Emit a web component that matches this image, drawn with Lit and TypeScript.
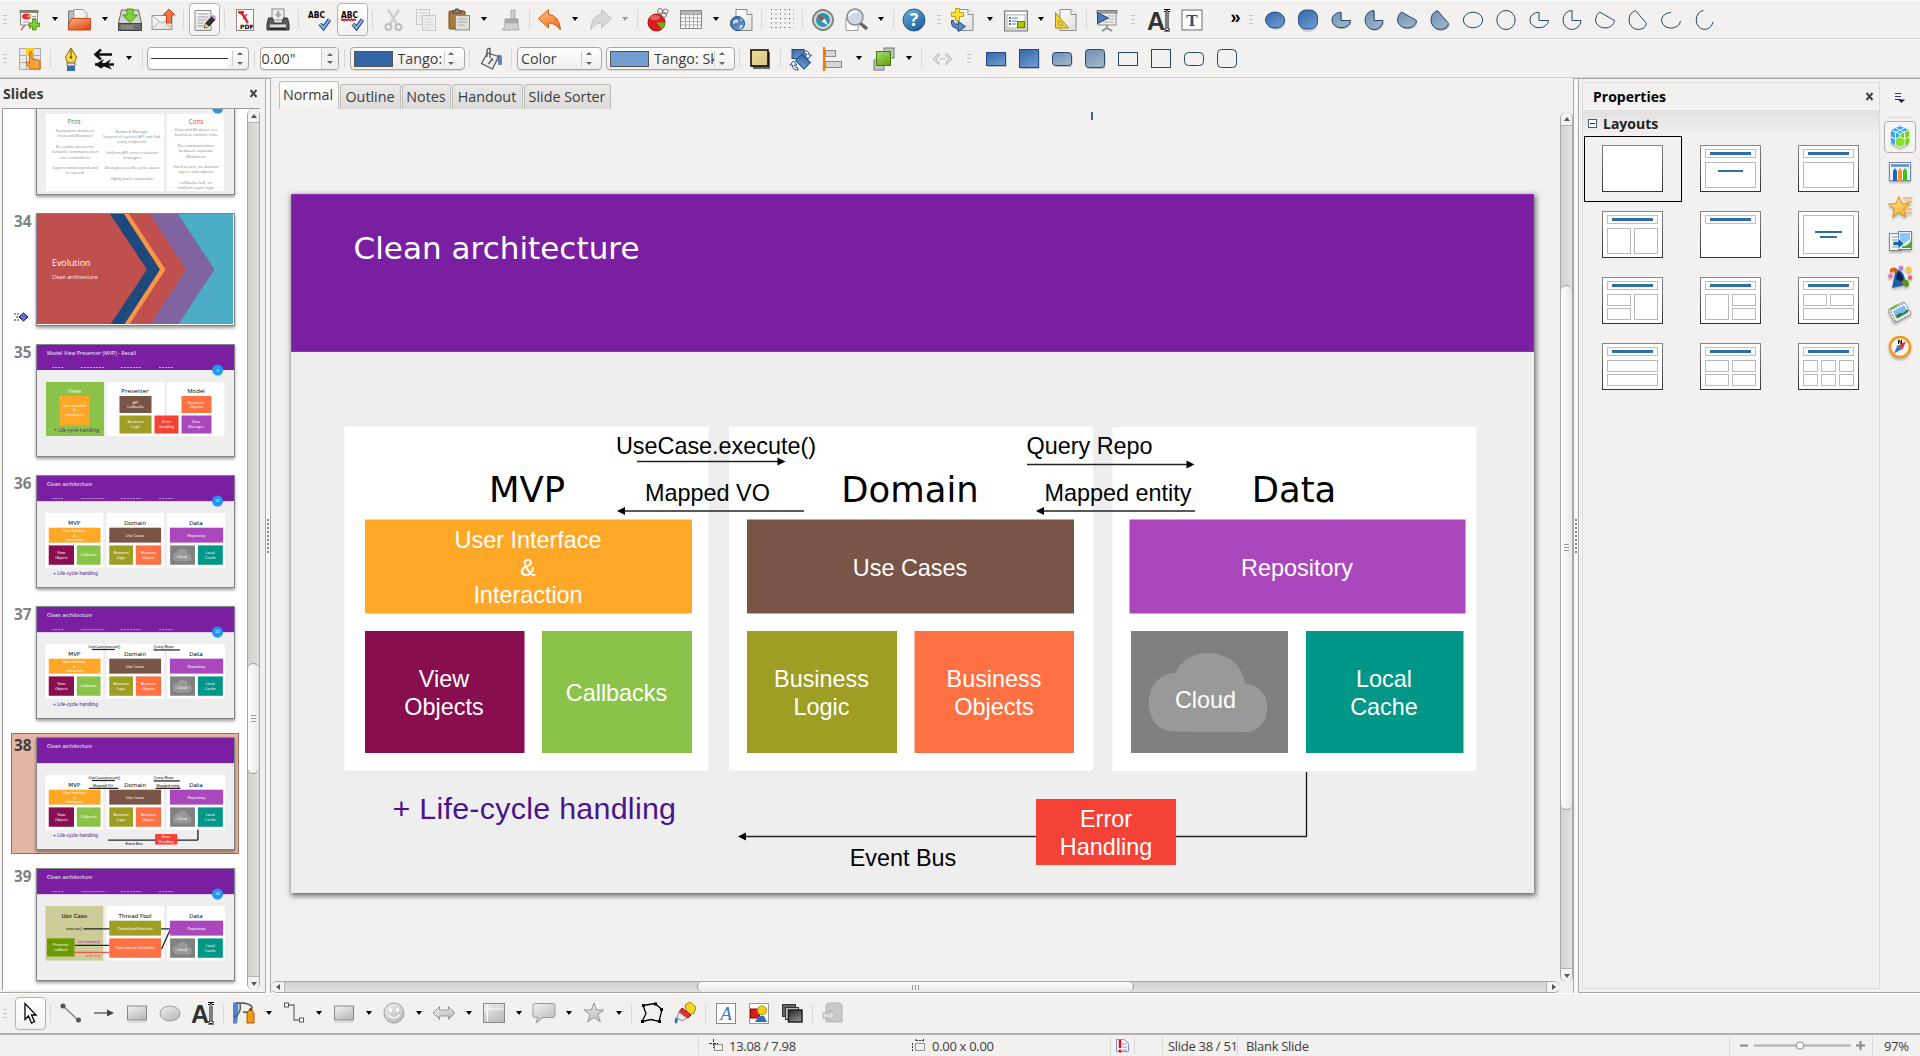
import { LitElement, html, css, svg, nothing } from "lit";
import { customElement } from "lit/decorators.js";
import { classMap } from "lit/directives/class-map.js";

/* ---------- icon artwork, 24 x 24 ---------- */
const page = svg`<path d="M4 1.500h11l5 5v16H4z" fill="url(#paper)" stroke="#8a8c88"/><path d="M15 1.500v5h5" fill="#fff" stroke="#8a8c88"/>`;
const box3 = (x: number, y: number, w: number, h: number, r = 0, f = "url(#navy)", s = "#204a87") =>
  svg`<rect x=${x + 1} y=${y + 1.5} width=${w} height=${h} rx=${r} fill="#000" opacity=".22"/><rect x=${x} y=${y} width=${w} height=${h} rx=${r} fill=${f} stroke=${s}/>`;
const pieW = "M12 4.200A9.300 7.800 0 1 0 21.500 12.500H12z";
const pieT = "M12 2.500A9 9.500 0 1 0 21 12.500H12z";
const segW = "M6.500 4L21.500 12.500A9.300 8 0 0 1 12 20A9.500 8 0 0 1 2.500 12Q2.500 7 6.500 4z";
const segT = "M9.500 2.500L20.500 15.500A9 7 0 0 1 12.500 21.500A9 9.500 0 0 1 3 12Q3 5 9.500 2.500z";
const blob = (d: string) => svg`<path d=${d} transform="translate(1 1.300)" fill="#000" opacity=".25"/><path d=${d} fill="url(#steel)" stroke="#204a6f"/>`;
const line = (d: string) => svg`<path d=${d} fill="none" stroke="#204a6f"/>`;
const check = svg`<path d="M13 16l3.500 4L22.500 11.500" fill="none" stroke="#204a87" stroke-width="4"/><path d="M13 16l3.500 4L22.500 11.500" fill="none" stroke="#8fb3e0" stroke-width="2"/>`;
const abc = svg`<text x="1" y="9.500" class="abc" textLength="17" lengthAdjust="spacingAndGlyphs">ABC</text>`;

const ICONS: Record<string, unknown> = {
  newpres: svg`<rect x="1.500" y="2" width="19" height="3" fill="#8a7a66"/><path d="M7 17l-4 5M12 17v4" stroke="#a67c52" stroke-width="1.500"/><rect x="2.500" y="4.500" width="17" height="12.500" fill="#f4f4f4" stroke="#8a8c88"/><ellipse cx="8.500" cy="8.500" rx="4.500" ry="3" fill="#d33"/><path d="M8.500 8.500l4-2.500v4z" fill="#f5b93f"/><path d="M14 8.500h4M14 10.500h4M5 14h6" stroke="#999"/><path d="M14.500 11.500h3.500v3.500h3.500v3.500H18v3.500h-3.500v-3.500H11V15h3.500z" fill="#7fd13a" stroke="#4e9a06"/>`,
  open: svg`<path d="M.5 3h7l1 2H11v15H.5z" fill="#b9bbb6" stroke="#777"/><path d="M6 1.500h9l4 4v12H6z" fill="url(#paper)" stroke="#999"/><path d="M3.500 10.500h19v11.500H.5v-5z" fill="url(#orange)" stroke="#c44a13"/>`,
  save: svg`<path d="M3.500 2h17l3 13v7H.5v-7z" fill="#d3d5d0" stroke="#666"/><path d="M.5 15.500h23v7H.5z" fill="#6c6e6a" stroke="#444"/><path d="M3 18h13M3 20h13" stroke="#a0a29e"/><path d="M9 1h6v6h4.500L12 14.500 4.500 7H9z" fill="#7ed03a" stroke="#4e9a06"/>`,
  mail: svg`<rect x="1" y="7.500" width="20" height="14" fill="url(#paper)" stroke="#999"/><path d="M1 7.500l10 8 10-8M1 21.500l7.500-8M21 21.500l-7.500-8" fill="none" stroke="#aaa"/><path d="M15.500 15V7h-3.500L18 1l6 6h-3.500v8z" fill="#f0764a" stroke="#d2461a"/>`,
  edit: svg`<path d="M3 2.500h16v20H3z" fill="url(#paper)" stroke="#8a8c88"/><path d="M5.500 6h11M5.500 9h11M5.500 12h9M5.500 15h6M5.500 18h6" stroke="#9a9a9a"/><path d="M12.500 20l1-4.500L20 8.500l3 3-6.500 7z" fill="#333" stroke="#111"/><path d="M12.500 20l1-4.500 3.500 3z" fill="#f5d08c"/><path d="M19.500 8.500l2-2 2.500 3-1.500 2z" fill="#c88ac4"/>`,
  pdf: svg`<rect x="3.500" y="1.500" width="17" height="21" fill="#f8f8f8" stroke="#8a8c88"/><path d="M6 4.500c5 0 6 7 9 10.500" fill="none" stroke="#d22" stroke-width="2.500"/><path d="M14 6l-4 5" stroke="#d22" stroke-width="1.200"/><path d="M5 4h6" stroke="#d22" stroke-width="2"/><text x="7" y="21" class="pdf">PDF</text>`,
  print: svg`<rect x="6" y="1" width="12" height="11" fill="#eee" stroke="#888"/><path d="M11 3h2.500v3H16l-3.700 4L8.500 6H11z" fill="#aaa"/><path d="M2.500 10h4l1.500 5h8l1.500-5h4l1.500 6v6H1v-6z" fill="#5a5c59" stroke="#333"/><rect x="4" y="16.500" width="16" height="4" fill="#ddd"/><path d="M4 20.500h16" stroke="#222" stroke-width="2"/>`,
  abc: svg`${abc}${check}`,
  abcauto: svg`${abc}<path d="M1 12.500l1.500-1.500 1.500 1.500 1.500-1.500 1.500 1.500 1.500-1.500 1.500 1.500 1.500-1.500 1.500 1.500 1.500-1.500 1.500 1.500" fill="none" stroke="#d11" stroke-width="1.500"/>${check}`,
  cut: svg`<path d="M7 1.500l8.500 14M18 1.500l-8.500 14" stroke="#d0d0ce" stroke-width="2.500"/><circle cx="7.500" cy="19" r="3" fill="none" stroke="#bdbdbb" stroke-width="2"/><circle cx="17.500" cy="19" r="3" fill="none" stroke="#bdbdbb" stroke-width="2"/>`,
  copy: svg`<rect x="2.500" y="1.500" width="13" height="15" fill="#eee" stroke="#c8c8c6"/><path d="M5 5h8M5 8h8M5 11h3" stroke="#d6d6d4"/><rect x="8.500" y="7.500" width="13" height="15" fill="#eee" stroke="#c8c8c6"/><path d="M11 11h8M11 14h8M11 17h8M11 20h5" stroke="#d0d0ce"/>`,
  paste: svg`<rect x="2" y="3" width="16" height="18" rx="1" fill="#a9793c" stroke="#6b4a1d"/><path d="M6 5V2.500h2.500V1h3v1.500H14V5z" fill="#888" stroke="#444"/><rect x="8.500" y="7.500" width="14" height="14.500" fill="#dededc" stroke="#888"/><path d="M11 11h9M11 14h9M11 17h6" stroke="#aaa"/>`,
  brush: svg`<path d="M14 2h4v9h-4z" fill="#ccc" stroke="#b0b0b0"/><path d="M8 11h13v4H8z" fill="#aaa" stroke="#999"/><path d="M8 15h13l1 7H5q3-2 3-7z" fill="#d2d2d0" stroke="#b0b0b0"/>`,
  undo: svg`<path d="M.5 10.500L10.500 1.500v5q11 1 12 15.500-5-7-12-7v5z" fill="url(#orange2)" stroke="#d2601a"/>`,
  redo: svg`<path d="M23.500 10.500L13.500 1.500v5Q3.500 7.500 2.500 22q4-7 11-7v5z" fill="#d8d8d6" stroke="#c2c2c0"/>`,
  chart: svg`<circle cx="10.500" cy="14.500" r="8.500" fill="#e01b1b" stroke="#9a0c0c"/><path d="M10.500 14.500h8.500a8.500 8.500 0 0 1-3 6.500z" fill="#59c016"/><ellipse cx="9" cy="9.500" rx="5" ry="2.500" fill="#fff" opacity=".3"/><circle cx="14" cy="3" r="2.500" fill="none" stroke="#777"/><circle cx="19.500" cy="3.500" r="2.500" fill="none" stroke="#777"/><circle cx="18" cy="7" r="2.500" fill="none" stroke="#777"/>`,
  table: svg`<rect x="1.500" y="2.500" width="21" height="18" fill="#fff" stroke="#888"/><path d="M2 3h20v3.500H2z" fill="#b5b7b2"/><path d="M2 6.500h20M2 10h20M2 13.500h20M2 17h20M6.500 6v14M10.500 6v14M14.500 6v14M18.500 6v14" stroke="#a9aba7"/>`,
  webdoc: svg`<g transform="translate(3 0)">${page}</g><circle cx="8.500" cy="15.500" r="7" fill="url(#navy)" stroke="#1d4a86"/><path d="M4 13q3-3 5-1t-2 3-3 2zM11 17q3-1 3 1l-3 4q-1-2 0-5zM11 10l3 2-2 1z" fill="#c8d8ee"/>`,
  grid: svg`${[1, 5.5, 10, 14.5, 19].map(y => svg`<path d=${`M1 ${y + 0.5}h23`} stroke="#444" stroke-dasharray="1 3.500"/>`)}`,
  compass: svg`<circle cx="12" cy="12" r="10.500" fill="#8a8c88" stroke="#777"/><circle cx="12" cy="12" r="8" fill="#2f93ab" stroke="#dcdcdc" stroke-width="2"/><path d="M6.500 6.500l7 4-3 3z" fill="#e23a2a"/><path d="M17.500 17.500l-7-4 3-3z" fill="#e6f2f5"/>`,
  zoom: svg`<path d="M2 10h12v12.500H2z" fill="#fff" stroke="#999"/><path d="M16 15l7 6" stroke="#666" stroke-width="3.500"/><circle cx="11" cy="9" r="8" fill="#cfd9e6" stroke="#8a8c88" stroke-width="1.500"/><path d="M5 8q2-5 8-4" stroke="#fff" stroke-width="2" fill="none"/>`,
  help: svg`<circle cx="12" cy="12" r="11" fill="url(#help)" stroke="#1f5a8c"/><text x="12" y="18" text-anchor="middle" class="q">?</text>`,
  newslide: svg`<g transform="translate(2 0)">${page}</g><path d="M4.500 .5h4v4h4v4h-4v4h-4v-4h-4v-4h4z" fill="#f5e13a" stroke="#c4a000"/><path d="M2.500 12.500q0 4 5 4v-3l7 5-7 5v-3q-8 0-7-8z" fill="#5a8ac6" stroke="#204a87"/>`,
  layout: svg`<rect x=".5" y="3" width="23" height="20" fill="#d9dbd7" stroke="#777"/><rect x="3" y="7" width="18" height="13" fill="#fff" stroke="#b8b8b8"/><path d="M2 5h20" stroke="#fff" stroke-width="2"/><path d="M5 10h2M5 13h2M5 16h2" stroke="#204a87" stroke-width="1.500"/><path d="M8 10h6M8 13h5M8 16h4" stroke="#3d85c6"/><rect x="13.500" y="13.500" width="7" height="6" fill="#b5c400" stroke="#737a00"/>`,
  ruler: svg`<g transform="translate(2 0)">${page}</g><path d="M1.500 4.500v15.500h13z" fill="#f2d03a" stroke="#b08c00"/><path d="M5 12.500v4.500h4z" fill="#fff" stroke="#b08c00"/>`,
  present: svg`<path d="M12 17v3l-5 3M12 20l5 3" stroke="#888" fill="none" stroke-width="1.500"/><rect x="2" y="2.500" width="20" height="2.500" fill="#aaa" stroke="#777"/><rect x="3" y="5" width="18" height="12" fill="#eee" stroke="#888"/><path d="M13 8h6M13 11h6M8 14h10" stroke="#aaa"/><path d="M2.500 4.500v11l11-5.500z" fill="#4a7cbc" stroke="#204a87"/>`,
  bigA: svg`<text x="0" y="21.500" class="bigA">A</text><path d="M17 2.500h2l1 1 1-1h2M17 22h2l1-1 1 1h2M20 3.500v17.500" stroke="#000" stroke-width="3" fill="none"/><path d="M17 2.500h2l1 1 1-1h2M17 22h2l1-1 1 1h2M20 3.500v17.500" stroke="#fff" stroke-width="1" fill="none"/>`,
  tbox: svg`<rect x="2" y="2" width="20" height="20" fill="#fdfdfd" stroke="#6b6d6a"/><text x="12" y="18" text-anchor="middle" class="tt">T</text>`,
  eW: svg`<ellipse cx="13" cy="13.500" rx="9.500" ry="8" fill="#000" opacity=".25"/><ellipse cx="12" cy="12" rx="9.500" ry="8" fill="url(#navy)" stroke="#204a87"/>`,
  eT: svg`<rect x="3" y="4" width="19" height="20" rx="8" fill="#000" opacity=".12"/><rect x="2.500" y="2" width="19" height="19" rx="7.500" fill="url(#navy)" stroke="#204a87"/>`,
  pW: blob(pieW), pT: blob(pieT), sW: blob(segW), sT: blob(segT),
  oeW: svg`<ellipse cx="12" cy="12" rx="9.700" ry="7.800" fill="none" stroke="#204a6f"/>`,
  oeT: svg`<ellipse cx="12" cy="12" rx="9.200" ry="9.500" fill="none" stroke="#204a6f"/>`,
  opW: line(pieW), opT: line(pieT), osW: line(segW), osT: line(segT),
  aW: line("M12 4.500A9.500 7.800 0 1 0 21.500 13"), aT: line("M11.500 2.500A8.500 9.500 0 1 0 21 14"),
  hand: svg`<path d="M1.500 1.500h21v21h-21z" fill="#e8e8e6" stroke="#aaa"/><path d="M8.500 1v22M15.500 1v22M1 8.500h22M1 15.500h22" stroke="#aaa"/><rect x="8" y="1" width="8" height="8" fill="#f6d21c"/><path d="M11.500 5q2-1 2.500 1v6l7 1q1 0 1 3v6H12l-4-6q0-2 2-1l1.500 1.500z" fill="#f5a13c" stroke="#d26a0c"/>`,
  pen: svg`<path d="M12 1L6.500 10l2 6h7l2-6z" fill="#f6d94a" stroke="#8a6d00"/><path d="M12 2v8" stroke="#6b5400"/><circle cx="12" cy="10.500" r="1.200" fill="#6b5400"/><path d="M8 16h8v3H8z" fill="#e0e0e0" stroke="#777"/><path d="M8 19h8v5H8z" fill="#3a6cab"/>`,
  lineends: svg`<path d="M3 7.500h17M9 2.500L3.500 7.500l5.500 5M3 17.500h19" fill="none" stroke="#111" stroke-width="2.600"/><path d="M3 17.500l9-5.500-2 4h3l6-4-3 5.500 4 5-8-3-3 2z" fill="#111"/>`,
  bucket: svg`<path d="M18.500 8q4.500-1 4.500 3v7h-3.500l-1-5z" fill="#5f86bd"/><path d="M8.500 6l11 3.500-6 12.500L2.500 16.500z" fill="url(#paper)" stroke="#555" stroke-width="1.200"/><path d="M8 10V3q1-2 3-1.500v9.500M12.500 13l-3 4" fill="none" stroke="#555" stroke-width="1.300"/><circle cx="13" cy="12.500" r="1.200" fill="#555"/>`,
  shadow: svg`<rect x="5" y="5" width="17" height="17" fill="#444" opacity=".8"/><rect x="3" y="3" width="17" height="16" fill="url(#sand)" stroke="#000" stroke-width="1.500"/>`,
  rotate: svg`<rect x="3" y="2.500" width="12" height="9" fill="url(#navy)" stroke="#204a87"/><rect x="8" y="10" width="12" height="9" transform="rotate(45 14 14.500)" fill="url(#navy)" stroke="#204a87"/><path d="M15 4q5-1 5 4h2.500L19 12l-3.500-4H18q0-2-3-2zM9 23q-6 0-5.500-5H1l3.500-4 3.500 4H5.500q0 2.500 3.500 3z" fill="#fff" stroke="#204a87"/>`,
  align: svg`<rect x="3.500" y="3.500" width="10" height="6" fill="#d5d7d2" stroke="#8a8c88"/><rect x="3.500" y="14.500" width="16" height="6" fill="#d5d7d2" stroke="#8a8c88"/><path d="M2 0v24" stroke="#f57900" stroke-width="2.200"/>`,
  arrange: svg`<rect x="12" y="1" width="10" height="10" fill="#c5c7c3" stroke="#777"/><rect x="2" y="13" width="10" height="10" fill="#c5c7c3" stroke="#777"/><rect x="4.500" y="4.500" width="14" height="14" fill="url(#green)" stroke="#3f7d06"/>`,
  brackets: svg`<path d="M9 6l-6 6 6 6v-3l-3-3 3-3zM16 6l6 6-6 6v-3l3-3-3-3z" fill="#ddd" stroke="#bbb"/><circle cx="11" cy="12" r="1" fill="#bbb"/><circle cx="14" cy="12" r="1" fill="#bbb"/>`,
  r1: box3(2.5, 5.5, 19, 13), r2: box3(2.5, 2.5, 19, 18),
  r3: box3(2.5, 5.5, 19, 13, 3, "url(#steel)", "#204a6f"), r4: box3(2.5, 2.5, 19, 18, 3, "url(#steel)", "#204a6f"),
  r5: svg`<rect x="2.500" y="5.500" width="19" height="13" fill="none" stroke="#204a6f"/>`,
  r6: svg`<rect x="2.500" y="2.500" width="19" height="18" fill="none" stroke="#204a6f"/>`,
  r7: svg`<rect x="2.500" y="5.500" width="19" height="13" rx="4" fill="none" stroke="#204a6f"/>`,
  r8: svg`<rect x="2.500" y="2.500" width="19" height="18" rx="4" fill="none" stroke="#204a6f"/>`,
  pointer: svg`<path d="M7 2.500v16l3.500-3.500 3 7 3-1.500-3-6.500h4.500z" fill="#fff" stroke="#000" stroke-width="1.300"/>`,
  dline: svg`<path d="M4 5l15 14" stroke="#888" stroke-width="1.500"/><circle cx="4" cy="5" r="2.500" fill="#555"/><circle cx="19.500" cy="19" r="2.500" fill="#555"/>`,
  darrow: svg`<path d="M2 12h16" stroke="#666" stroke-width="1.500"/><path d="M15 8.500l7 3.500-7 3.500z" fill="#444"/>`,
  drect: svg`<rect x="2.500" y="5" width="19" height="14" fill="url(#gray)" stroke="#888"/><path d="M3 21h18" stroke="#ccc"/>`,
  dell: svg`<ellipse cx="12" cy="12.500" rx="10" ry="7.500" fill="url(#gray)" stroke="#999"/>`,
  curve: svg`<path d="M1 1.500h5q1 10-1 21H1z" fill="#4a8ad0"/><path d="M2 16q8-3 6-14M4 2h9M6 2q14 0 14 5t-9 4" fill="none" stroke="#555" stroke-width="1.500"/><path d="M15 12l3.500-5 3.500 5v10h-7z" fill="#f59a1a" stroke="#a55a00"/><path d="M17 9.500l1.500-2.500 1.500 2.500z" fill="#333"/>`,
  connector: svg`<path d="M6 4h6v15h6" fill="none" stroke="#777" stroke-width="1.300"/><rect x="2.500" y="2" width="4" height="4" fill="#fff" stroke="#555"/><rect x="17.500" y="17" width="4" height="4" fill="#fff" stroke="#555"/>`,
  smiley: svg`<circle cx="12" cy="12" r="10" fill="url(#gray)" stroke="#a0a0a0"/><ellipse cx="8.500" cy="9" rx="1.500" ry="2" fill="#fff"/><ellipse cx="15.500" cy="9" rx="1.500" ry="2" fill="#fff"/><path d="M6.500 14q5.500 6 11 0" fill="none" stroke="#fff" stroke-width="1.500"/>`,
  dbl: svg`<path d="M1 12l6.500-6.500V9h9V5.500L23 12l-6.500 6.500V15h-9v3.500z" fill="url(#gray)" stroke="#999"/>`,
  flow: svg`<rect x="1.500" y="2.500" width="21" height="19" fill="url(#gray)" stroke="#888"/><path d="M5.500 3v18M2 8h20" stroke="#fff"/>`,
  callout: svg`<path d="M3 2.500h18q2 0 2 2v10q0 2-2 2H11L4 22l2-5.500H3q-2 0-2-2v-10q0-2 2-2z" fill="url(#gray)" stroke="#999"/>`,
  star: svg`<path d="M12 2l2.600 7H22l-6 4.500 2.400 7.500L12 16.500 5.600 21 8 13.500 2 9h7.400z" fill="url(#gray)" stroke="#999"/>`,
  poly: svg`<path d="M3 4.500l12-2 7 6-3 12-8-2-9 2 4-8z" fill="none" stroke="#000" stroke-width="1.300"/><path d="M2 3h3v3H2zM14 1.500h3v3h-3zM20 7h3v3h-3zM18 19h3v3h-3zM1 19h3v3H1z" fill="#000"/>`,
  glue: svg`<path d="M12 4l5-3 6 5-2 6-6 3z" fill="#f5d72a" stroke="#a88a00"/><path d="M9 7l9 7-3 3-9-6z" fill="#e23232" stroke="#a00"/><path d="M6 11l8 6-5 3-5-3z" fill="#e8e8e8" stroke="#888"/><path d="M3 16q4 3 0 7-3-2 0-7z" fill="#3b78c4"/>`,
  fontwork: svg`<rect x="2.500" y="2.500" width="19" height="20" fill="#fff" stroke="#8a8c88"/><text x="12" y="19" text-anchor="middle" class="fw">A</text>`,
  fromfile: svg`<rect x="2.500" y="2.500" width="19" height="20" fill="#fff" stroke="#999"/><rect x="3.500" y="8" width="9" height="9" fill="#d81e1e" stroke="#800"/><path d="M8 21l4-6h5l3 6z" fill="#2a6fc0"/><circle cx="15" cy="9.500" r="4.500" fill="#f5cd1d" stroke="#b08c00"/>`,
  gallery: svg`<rect x="2.500" y="3.500" width="13" height="12" fill="#666" stroke="#333"/><rect x="5.500" y="6.500" width="13" height="12" fill="#bbb" stroke="#333"/><rect x="8.500" y="9" width="13.500" height="12" fill="url(#dark)" stroke="#222" stroke-width="1.500"/>`,
  extr: svg`<path d="M5 4q1-2 4-2h9q2 0 3 2v17H5z" fill="#c9c9c7" stroke="#b5b5b3"/><path d="M2 12h7V9l5 5.500L9 20v-3H2z" fill="#dededc" stroke="#b0b0ae"/>`,
  /* sidebar */
  cubes: svg`<path d="M12 1l9 4v13l-9 4.500-9-4.500V5z" fill="#3aa9f0"/><path d="M12 9l9-4v13l-9 4.500z" fill="#7bd11a"/><path d="M3 12l9 4 9-4M12 9v13.500M3 5l9 4 9-4M7.500 3l9 4.500v13M16.500 3l-9 4.500v13" fill="none" stroke="#fff" stroke-width=".9"/><path d="M7.500 14l4.500-2 5 2v5.500l-5 3-4.500-3z" fill="#8be02a" stroke="#fff" stroke-width=".8"/>`,
  master: svg`<rect x="1.500" y="2.500" width="21" height="18" fill="#eef2f8" stroke="#6b86a8"/><path d="M3 5.500h18" stroke="#5a8ad0" stroke-width="2.500"/><path d="M5 11l2-3 2 3v10H5z" fill="#1f62d0"/><path d="M10 11l2-3 2 3v10h-4z" fill="#f59a0a"/><path d="M15 11l2-3 2 3v10h-4z" fill="#3ec41a"/>`,
  anim: svg`<path d="M15 3h9M18 7h6M18 14h6M17 18h7" stroke="#f5b050" stroke-width="1.300"/><path d="M11 1.500l3 7 7.500.5-6 5 2.500 8-7-4.500L4.500 22 6.500 14 .5 9l7.500-.5z" fill="url(#gold)" stroke="#d8921a"/>`,
  trans: svg`<rect x="1.500" y="3.500" width="12" height="17" fill="#f4f4f4" stroke="#888"/><path d="M4 7h6M4 10h6M4 17h6" stroke="#999"/><rect x="10.500" y="1.500" width="13" height="18" fill="#e6f2ff" stroke="#4a8ad8"/><path d="M12 3h10v7l-3 1-7 6z" fill="#8fc4fa"/><path d="M14 18v-2q5 1 9-5v7z" fill="#5aa02a"/><path d="M5 11.500h5V8l6 5.500-6 5.500v-3.500H5z" fill="#0a6ab8" stroke="#fff" stroke-width=".6"/>`,
  effects: svg`<path d="M8 4q10 2 9 16L4 23z" fill="#1b5fa8"/><path d="M10 6q6 4 5 11l-7-3z" fill="#0a1f4a"/><path d="M2 4q6-4 8 2l-2 2q-3-3-6 0zM14 17q6-4 7 4l-4 1q1-3-3-3z" fill="#d8601a"/><path d="M14 15q7-2 7 5l-4 2z" fill="#4e9a1a"/><circle cx="13" cy="3" r="2.300" fill="#d26af0"/><circle cx="2.500" cy="11" r="2.300" fill="#f06aa8"/><circle cx="20.500" cy="4.500" r="3" fill="#f5c842"/><circle cx="22" cy="12.500" r="2.200" fill="#f0605a"/>`,
  pics: svg`<rect x="2" y="5" width="17" height="14" transform="rotate(-28 11 12)" fill="#f8f8f8" stroke="#999"/><rect x="4" y="6" width="17" height="13" transform="rotate(-28 12 12)" fill="#fff" stroke="#777" stroke-dasharray="2 1"/><rect x="6" y="8" width="13" height="9" transform="rotate(-28 12 12)" fill="#7ac0f5"/><path d="M7 16l5-3 3 0 5-4 .5 2.500-11 6.500z" fill="#3a7a1a"/><path d="M3 9l6-4" stroke="#5ac81a" stroke-width="2"/>`,
  navi: svg`<circle cx="12" cy="12" r="10" fill="#f4f4f4" stroke="#f5981a" stroke-width="2.600"/><text x="12" y="8.500" text-anchor="middle" class="nn">N</text><path d="M18 6l-3.500 8.500-4-4z" fill="#e23232"/><path d="M6 18.500l3.500-8.500 5 4z" fill="#3b78c4"/>`,
};

type Item = string | [string, number];
const TB1: Item[] = ["g0", "newpres", "v", "open", "v", "save", "mail", "|", "edit*", "|", "pdf", "print", "|", "abc", "abcauto*", "|", "cut", "copy", "paste", "v", "brush", "|", "undo", "v", "redo", "v-", "|", "chart", "table", "v", "webdoc", "|", "grid", "|", "compass", "zoom", "v", "|", "help", "g", "newslide", ["v", 20], "layout", "v", "ruler", "|", "present", ["g", 19], "bigA", "tbox", ["_", 19], "»", ["g", 15], "eW", "eT", "pW", "pT", "sW", "sT", "oeW", "oeT", "opW", "opT", "osW", "osT", "aW", "aT"];
const TB2A: Item[] = ["g0", "hand", "|", "pen", "lineends", "v", ["|", 9.5]];
const TB2B: Item[] = [["|", 8], "shadow", "|", "rotate", "align", "v", "arrange", "v", "|", "brackets", ["g", 21], "r1", "r2", "r3", "r4", "r5", "r6", "r7", "r8"];
const TB3: Item[] = ["g0", "pointer*", "|", "dline", "darrow", "drect", "dell", "bigA", "|", "curve", "v", "connector", "v", "drect", "v", "smiley", "v", "dbl", "v", "flow", "v", "callout", "v", "star", "v", "|", "poly", "glue", "|", "fontwork", "fromfile", "gallery", "|", "extr"];

/* ---------- slide artwork, drawn in canvas coordinates ---------- */
type Box = [number, number, number, number, string, string[], number, number];
const BOXES: Box[] = [
  [365, 519.5, 327, 94, "#ffa726", ["User Interface", "&", "Interaction"], 528, 547.7],
  [747, 519.5, 327, 94, "#795548", ["Use Cases"], 910, 575.7],
  [1129.5, 519.5, 336, 94, "#ab47bc", ["Repository"], 1297, 575.7],
  [365, 631, 159.5, 122, "#880e4f", ["View", "Objects"], 444, 686.7],
  [542, 631, 150, 122, "#8bc34a", ["Callbacks"], 616.5, 700.7],
  [747, 631, 150, 122, "#9e9d24", ["Business", "Logic"], 821.5, 686.7],
  [914.5, 631, 159.5, 122, "#ff7043", ["Business", "Objects"], 994, 686.7],
  [1131, 631, 157, 122, "#808080", [], 0, 0],
  [1306, 631, 157.5, 122, "#009688", ["Local", "Cache"], 1384, 686.7],
];
const ERR: Box = [1036, 799, 140, 66, "#f44336", ["Error", "Handling"], 1106, 826.7];
const drawBox = ([x, y, w, h, c, t, cx, by]: Box) => svg`
  <rect x=${x} y=${y} width=${w} height=${h} fill=${c}/>
  ${t.map((s, i) => svg`<text class="s" x=${cx} y=${by + i * 27.8} fill="#fff">${s}</text>`)}`;
const cloud = svg`<path d="M1172 732C1156 730 1148 717 1148.400 702C1148.400 686 1160 673 1175 672.500C1181 660 1193 652.700 1208 652.700C1230 652.700 1244 668 1245 683C1258 684 1267.700 694 1267.700 707C1267.700 720 1260 730 1249.500 732.500z" fill="#999" stroke="#777" stroke-dasharray="2 2"/><text class="s" x="1205.500" y="707.700" fill="#fff">Cloud</text>`;
const arrow = (x1: number, x2: number, y: number, sw: number) => {
  const d = x2 > x1 ? -1 : 1;
  return svg`<path d=${`M${x1} ${y}H${x2 + d * 6}`} stroke="#222" stroke-width=${sw} fill="none"/><path d=${`M${x2} ${y}l${d * 8} -4v8z`} fill="#000"/>`;
};
const head = (title: string, w = 286) => svg`
  <rect x="291" y="194" width="1243" height="699" fill="#eee"/>
  <rect x="291" y="194" width="1243" height="158" fill="#7b1fa2"/>
  <rect x="291.500" y="194.500" width="1242" height="157" fill="none" stroke="#9330b4"/>
  <text x="353.500" y="258.700" class="h" fill="#fff" textLength=${w}>${title}</text>`;
const panels = (names: string[], first = "#fff") => svg`
  <rect x="344.500" y="426.500" width="364" height="344" fill=${first}/>
  <rect x="729" y="426.500" width="364" height="344" fill="#fff"/>
  <rect x="1112.500" y="427" width="364" height="344" fill="#fff"/>
  ${names.map((n, i) => svg`<text class="p" x=${[527, 910, 1294][i]} y="502">${n}</text>`)}`;
const life = svg`<text x="392.500" y="818.500" class="l" textLength="283.500">+ Life-cycle handling</text>`;
const badge = (n: string) => svg`
  <path d="M385 336h72M570 336h150M820 336h130M1060 336h90" stroke="#c9a3da" stroke-width="5" stroke-dasharray="14 5"/>
  <circle cx="1430" cy="352" r="35" fill="#2196f3"/><text class="s" x="1430" y="360" fill="#fff">${n}</text>`;
const clean = (level: number, sw = 1.3, num = "") => svg`
  ${head("Clean architecture")}${num ? badge(num) : nothing}${panels(["MVP", "Domain", "Data"])}
  ${BOXES.map(drawBox)}${cloud}${life}
  ${level > 0 ? svg`<text class="s" x="716" y="453.700">UseCase.execute()</text>${arrow(637, 785.5, 461.5, sw)}
    <text class="s" x="1089.500" y="453.700">Query Repo</text>${arrow(1027, 1194.5, 464.5, sw)}` : nothing}
  ${level > 1 ? svg`<text class="s" x="707.500" y="500.700">Mapped VO</text>${arrow(804, 617, 511, sw)}
    <text class="s" x="1118" y="500.700">Mapped entity</text>${arrow(1195, 1036, 511, sw)}
    <path d="M1306.500 772V836.500" stroke="#111" stroke-width=${sw}/>${arrow(1307, 738, 836.5, sw)}
    <text class="s" x="903" y="866">Event Bus</text>${drawBox(ERR)}` : nothing}`;

const tiny = (x: number, y: number, lines: string[], c: string, size = 5, lh = 5) =>
  lines.map((t, i) => svg`<text x=${x} y=${y + i * lh} font-size=${size} fill=${c} text-anchor="middle">${t}</text>`);
const localHead = (n: string) => svg`<rect width="197" height="111" fill="#eee"/><rect width="197" height="25" fill="#7b1fa2"/><path d="M15 22.500h11M44 22.500h24M84 22.500h20M122 22.500h14" stroke="#c9a3da" stroke-dasharray="2 1"/><circle cx="180.700" cy="25" r="5.500" fill="#2196f3"/>${tiny(180.7, 26.5, [n], "#fff", 4)}`;
const rect = (x: number, y: number, w: number, h: number, c: string) => svg`<rect x=${x} y=${y} width=${w} height=${h} fill=${c}/>`;

const s33 = svg`${localHead("")}${rect(78, 24, 33, 2, "#90caf9")}${rect(9, 31, 118, 77, "#fff")}${rect(130, 31, 57, 77, "#fff")}
  ${tiny(37, 41, ["Pros"], "#12a150", 6.3)}${tiny(159, 41, ["Cons"], "#f44336", 6.3)}
  ${tiny(38, 49, ["Separation between", "View and Mediator", "", "Re-usable pieces for", "network communication", "(via Controllers)", "", "Easy to understand and", "to extend"], "#888", 4.1, 5.3)}
  ${tiny(95, 50, ["Network Manager", "Support of various API and 3rd-", "party endpoints", "", "Uniform API error resolution", "strategies", "", "Strategies are life-cycle aware", "", "Highly back compatible"], "#888", 4, 5.2)}
  ${tiny(159, 48, ["View and Mediator are", "bound at compile time", "", "No communication", "between separate", "Mediators", "", "Hard to test, no domain", "layers and objects", "", "Callbacks hell, no", "uniform async logic"], "#888", 4.1, 5.3)}`;
const s34 = svg`<rect width="197" height="111" fill="#4bacc6"/><path d="M0 0H141L177.500 55.500 141 111H0z" fill="#8064a2"/><path d="M0 0H113L149 55.500 113 111H0z" fill="#c0504d"/><path d="M0 0H92L128.500 55.500 92 111H0z" fill="#f79646"/><path d="M0 0H87L123 55.500 87 111H0z" fill="#1f497d"/><path d="M0 0H73L110 55.500 73 111H0z" fill="#c0504d"/><path d="M0 110.500H197M196.500 0V111" stroke="#fff"/>
  <text x="15" y="52" font-size="8.800" fill="#fff" textLength="38.500">Evolution</text><text x="15" y="65" font-size="5" fill="#fff" textLength="45.500">Clean architecture</text>`;
const s35 = svg`${localHead("9")}<text x="10" y="10" font-size="5" fill="#fff" textLength="89">Model View Presenter (MVP) - Recall</text>
  ${rect(9, 37, 58, 54, "#8bc34a")}${rect(69.5, 37, 58, 54, "#fff")}${rect(130, 37, 57.5, 54, "#fff")}
  ${rect(22.5, 51, 30, 29.5, "#ffa726")}${rect(82.5, 51, 32, 17, "#795548")}${rect(82.5, 70.5, 32, 18, "#9e9d24")}${rect(117.5, 70.5, 24, 18, "#f44336")}${rect(144.5, 51, 30, 17, "#ff7043")}${rect(144.5, 70.5, 30, 18, "#ab47bc")}
  ${tiny(37.5, 48, ["View"], "#fff", 6)}${tiny(98, 48, ["Presenter"], "#000", 6)}${tiny(159, 48, ["Model"], "#000", 6)}
  ${tiny(37.5, 62, ["User Interface", "&", "Interaction"], "#fff", 3.6, 4.4)}${tiny(98.5, 59, ["API", "Callbacks"], "#fff", 3.9, 4.2)}${tiny(98.5, 78, ["Business", "Logic"], "#fff", 3.9, 4.8)}${tiny(129.5, 78, ["Error", "Handling"], "#fff", 3.7, 4.8)}${tiny(159, 59, ["Business", "Objects"], "#fff", 3.9, 4.2)}${tiny(159, 78, ["Data", "Manager"], "#fff", 3.9, 4.8)}
  <text x="17" y="87" font-size="4.600" fill="#4a148c" textLength="45">+ Life-cycle handling</text>`;
const s39 = svg`${head("Clean architecture")}${badge("23")}${panels(["Use Case", "Thread Pool", "Data"], "#cccc99")}
  <path d="M585 571H1112M530 675H747M1074 571H1130M1076 700L1130 580" stroke="#222" stroke-width="8" fill="none"/><path d="M530 719H747" stroke="#ef5350" stroke-width="8"/>
  ${[[747, 519.5, 327, 94, "#9e9d24", ["Thread pool Executor"], 910, 575.7] as Box, [747, 631, 327, 122, "#ff7043", ["Post-execute Scheduler"], 910, 700] as Box, [354, 631, 174, 114, "#6a9a00", ["Presenter", "callback"], 441, 682] as Box, BOXES[2], BOXES[7], BOXES[8]].map(drawBox)}${cloud}
  <text class="s" x="525" y="577">execute()</text><text class="s" x="620" y="658" fill="#9c27b0">onComplete()</text><text class="s" x="645" y="747" fill="#ef5350">onError()</text>`;

const LOCAL = "0 0 197 111", CANVAS = "291 194 1243 699";
const SLIDES: [number, string, unknown][] = [
  [33, LOCAL, s33], [34, LOCAL, s34], [35, LOCAL, s35],
  [36, CANVAS, clean(0, 8, "22")], [37, CANVAS, clean(1, 8, "22")], [38, CANVAS, clean(2, 8)], [39, CANVAS, s39],
];
/* the first row is scrolled half out of view, its number is above the list edge */
const FIRST_VISIBLE = 34;

/* layout previews: list of placeholder rectangles below the title */
const LAYOUTS: { title?: boolean; boxes?: number[][]; bars?: number[][] }[] = [
  {},
  { title: true, boxes: [[5, 17, 51, 26]], bars: [[18, 25, 25, 2]] },
  { title: true, boxes: [[5, 17, 51, 26]] },
  { title: true, boxes: [[5, 17, 24, 26], [32, 17, 24, 26]] },
  { title: true },
  { boxes: [[5, 4, 51, 39]], bars: [[17, 20, 27, 2], [22, 25, 17, 2]] },
  { title: true, boxes: [[5, 17, 24, 12], [5, 31, 24, 12], [32, 17, 24, 26]] },
  { title: true, boxes: [[5, 17, 24, 26], [32, 17, 24, 12], [32, 31, 24, 12]] },
  { title: true, boxes: [[5, 17, 24, 12], [32, 17, 24, 12], [5, 31, 51, 12]] },
  { title: true, boxes: [[5, 17, 51, 12], [5, 31, 51, 12]] },
  { title: true, boxes: [[5, 17, 24, 12], [32, 17, 24, 12], [5, 31, 24, 12], [32, 31, 24, 12]] },
  { title: true, boxes: [[5, 17, 15, 12], [23, 17, 15, 12], [41, 17, 15, 12], [5, 31, 15, 12], [23, 31, 15, 12], [41, 31, 15, 12]] },
];

@customElement("app-root")
export class AppRoot extends LitElement {
  static styles = css`
    :host { display: block; width: 1920px; height: 1056px; overflow: hidden; background: #f2f1f0; color: #3c3c3c; font: 14.300px "Open Sans", "Noto Sans", sans-serif; }
    * { box-sizing: border-box; }
    svg { display: block; flex: none; }
    .cell svg { overflow: visible; }
    .defs { position: absolute; width: 0; height: 0; }
    .app { display: flex; flex-direction: column; height: 1056px; }
    .tb { display: flex; align-items: center; height: 39px; flex: none; border-bottom: 1px solid #d2d0cd; border-top: 1px solid #fbfbfa; }
    .cell { flex: none; display: flex; align-items: center; justify-content: center; height: 33px; }
    .cell.ic { width: 33px; }
    .cell.on { width: 31px; margin: 0 1px; border: 1px solid #b4b2ae; border-radius: 4px; background: linear-gradient(#fff, #f3f2f1); }
    .v { width: 17px; } .sep { width: 8px; } .g { width: 16px; } .g0 { width: 13.500px; padding-right: 3px; }
    .sep i { width: 1px; height: 19px; background: #dad8d5; }
    .g i, .g0 i { width: 4px; height: 9px; background: repeating-linear-gradient(#c3c1be 0 1px, transparent 1px 4px); }
    .v i { border: 3.500px solid transparent; border-top: 4px solid #000; border-bottom: 0; margin-top: -1px; }
    .v.off i { border-top-color: #999; }
    .more { width: 16px; color: #000; font: bold 18px "Liberation Sans", sans-serif; padding-bottom: 4px; }
    .combo { flex: none; display: flex; align-items: center; height: 23px; border: 1px solid #a9a7a3; border-radius: 4px; background: linear-gradient(#fff, #efeeec); padding-left: 3px; white-space: nowrap; overflow: hidden; box-shadow: 0 1px 0 #dddbd8; }
    .combo .txt { flex: 1; overflow: hidden; }
    .spin { flex: none; width: 20px; height: 15px; border-left: 1px solid #cfcdca; display: flex; flex-direction: column; align-items: center; justify-content: space-between; padding: 1px 6px 1px 0; }
    .spin i { border: 3px solid transparent; border-bottom: 3.500px solid #666; border-top: 0; }
    .spin i + i { border-top: 3.500px solid #666; border-bottom: 0; }
    .ln { width: 77px; height: 18px; background: #fff; display: flex; align-items: center; flex: none; margin-right: 4px; }
    .ln i { width: 77px; height: 1px; background: #333; }
    .num { background: #fff; padding-left: 1px; }
    .num .spin { height: 21px; background: #f3f2f1; padding: 5px 0; width: 17px; }
    .sw { width: 39px; height: 16px; border: 1px solid #555; flex: none; margin-right: 5px; }
    .blue { background: #3465a4; } .sky { background: #729fcf; }
    .w102 { width: 102px; } .w79 { width: 79px; } .w115 { width: 115px; } .w85 { width: 85px; margin: 0 4px 0 2px; } .w129 { width: 129px; }

    .mid { display: flex; flex: none; height: 916px; border-bottom: 1px solid #fff; }
    .left { width: 266px; border-top: 1px solid #aaa8a4; border-right: 1px solid #aaa8a4; border-bottom: 1px solid #aaa8a4; display: flex; flex-direction: column; }
    .lt { height: 29px; display: flex; align-items: center; justify-content: space-between; padding: 0 7px 1px 3px; font-weight: 700; font-size: 14px; flex: none; }
    .x { flex: none; }
    .listrow { display: flex; height: 882px; margin-left: 2px; border-left: 1px solid #9d9b97; border-top: 1px solid #9d9b97; width: 258px; background: #fff; }
    .list { width: 244px; overflow: hidden; }
    .rows { display: flex; flex-direction: column; gap: 10px; margin: -31px 0 0 8px; }
    .row { width: 228px; height: 121px; flex: none; display: flex; padding: 3px 0 0 2px; border: 1px solid transparent; }
    .row.sel { background: #e3b5a3; border-color: #a36b56; }
    .n { width: 22px; flex: none; font-weight: 700; font-size: 15.300px; line-height: 16px; color: #808080; height: 110px; display: flex; flex-direction: column; justify-content: space-between; }
    .sel .n { color: #3f3f3f; }
    .th { width: 199px; height: 113px; border: 1px solid #808488; box-shadow: 0 2px 3px rgba(0,0,0,.4); flex: none; }
    .th svg, .slide svg { font-family: "DejaVu Sans", sans-serif; }
    .th .localfont { font-family: "Open Sans", sans-serif; }
    .sb { display: flex; flex-direction: column; width: 13px; background: linear-gradient(90deg, #d2d0cd, #e3e1df); border-left: 1px solid #aaa8a4; border-right: 1px solid #aaa8a4; border-radius: 6px; overflow: hidden; flex: none; }
    .btn { flex: none; height: 14px; background: #f4f3f2; display: flex; align-items: center; justify-content: center; border-bottom: 1px solid #b5b3b0; }
    .btn.dn { border-bottom: 0; border-top: 1px solid #b5b3b0; }
    .btn i { border: 3px solid transparent; border-bottom: 4px solid #555; border-top: 0; }
    .btn.dn i { border-top: 4px solid #555; border-bottom: 0; }
    .thumb { flex: none; background: linear-gradient(90deg, #fdfdfd, #ebe9e7); border: 1px solid #999793; border-width: 1px 0; border-radius: 6px; display: flex; align-items: center; justify-content: center; }
    .thumb i { width: 5px; height: 8px; background: repeating-linear-gradient(#999 0 1px, transparent 1px 3px); }
    .s-a { height: 540px; } .s-b { height: 111px; } .m-a { height: 159px; } .m-b { height: 525px; } .fill { flex: 1; }
    .split { width: 5px; background: #f8f7f6; border-right: 1px solid #aaa8a4; border-top: 1px solid #aaa8a4; flex: none; display: flex; align-items: center; justify-content: center; }
    .split i { width: 2px; height: 34px; background: repeating-linear-gradient(#8a8884 0 2px, transparent 2px 4px); }

    .main { width: 1302px; display: flex; flex-direction: column; flex: none; }
    .tabs { height: 31px; display: flex; align-items: flex-end; gap: 1px; padding-left: 8px; flex: none; }
    .tab { height: 25px; border: 1px solid #bfbdb9; border-bottom: 0; border-radius: 3px 3px 0 0; background: linear-gradient(#ebeae8, #dddbd9); text-align: center; line-height: 24px; white-space: nowrap; padding-right: 1px; }
    .tab.act { height: 28px; background: linear-gradient(#fdfdfd, #f4f3f2); line-height: 26px; padding-right: 2px; }
    .t1 { width: 60px; } .t2 { width: 61px; } .t3 { width: 49px; } .t4 { width: 71px; } .t5 { width: 87px; }
    .work { display: flex; height: 872px; padding-top: 3px; flex: none; }
    .canvas { width: 1289px; padding: 0 0 0 20px; }
    .tick { width: 2px; height: 8px; background: #3465a4; margin: 0 0 74px 800px; }
    .slide { width: 1243px; height: 699px; box-shadow: 1px 2px 5px 1px rgba(0,0,0,.55); }
    .slide svg { width: 1243px; height: 699px; }
    .vs { height: 870px; }
    .hs { display: flex; height: 12px; width: 1289px; border: 1px solid #aaa8a4; border-width: 1px 0; border-radius: 6px; overflow: hidden; background: linear-gradient(#d2d0cd, #e3e1df); flex: none; }
    .hb { width: 14px; background: #f4f3f2; border-right: 1px solid #b5b3b0; display: flex; align-items: center; justify-content: center; }
    .hb.rt { border: 0; border-left: 1px solid #b5b3b0; }
    .hb i { border: 3px solid transparent; border-right: 4px solid #555; border-left: 0; }
    .hb.rt i { border-left: 4px solid #555; border-right: 0; }
    .ht { width: 437px; background: linear-gradient(#fdfdfd, #ebe9e7); border: 1px solid #999793; border-width: 0 1px; border-radius: 6px; display: flex; align-items: center; justify-content: center; }
    .ht i { width: 8px; height: 5px; background: repeating-linear-gradient(90deg, #999 0 1px, transparent 1px 3px); }
    .gl { width: 412px; }

    .split.r { width: 6px; border-left: 1px solid #aaa8a4; }
    .right { flex: 1; display: flex; border-top: 1px solid #aaa8a4; border-bottom: 1px solid #aaa8a4; padding: 3px 0 0 3px; }
    .deck { width: 298px; height: 907px; border: 1px solid #dddbd9; }
    .dt { height: 27px; display: flex; align-items: center; justify-content: space-between; padding: 0 5px 1px 10px; font-weight: 700; font-size: 14px; color: #000; }
    .dl { height: 27px; display: flex; align-items: center; padding: 0 0 0 5px; gap: 6px; background: linear-gradient(#e1e0de, #f2f1f0); font-weight: 700; font-size: 14px; color: #222; }
    .grid { display: grid; grid-template-columns: repeat(3, 98px); grid-auto-rows: 66px; padding-left: 1px; margin-top: -1px; }
    .lay { display: flex; border: 1px solid transparent; padding: 8px 0 0 17px; }
    .lay.on { border-color: #000; }
    .side { width: 38px; display: flex; flex-direction: column; align-items: center; padding: 9px 0 0 1px; }
    .side hr { width: 24px; height: 1px; border: 0; background: #d8d6d3; margin: 14px 0 3px; }
    .sbtn { width: 32px; height: 32px; margin-bottom: 3px; display: flex; align-items: center; justify-content: center; border-radius: 4px; flex: none; }
    .sbtn.on { border: 1px solid #b0aeaa; background: #f6f5f4; }
    .sbtn svg { filter: drop-shadow(0 2px 1px rgba(0,0,0,.25)); }

    .bot { border: 0; border-bottom: 2px solid #b4b2af; height: 41px; padding-bottom: 1px; }
    .status { display: flex; align-items: center; height: 22px; flex: none; font-size: 13px; letter-spacing: -.300px; padding-bottom: 1px; white-space: nowrap; }
    .status > * { flex: none; }
    .status b { width: 1px; height: 19px; background: #dad8d5; }
    .b0 { margin-left: 698px; } .b1 { margin-left: 27px; }
    .i0 { margin: 0 5px 0 10px; } .i1 { margin-right: 6px; } .i2 { margin: 0 4px; } .i3 { margin: 0 3px 0 9px; }
    .f0 { width: 182px; } .f1 { width: 178px; } .f2 { width: 69px; margin-left: 5px; } .f3 { width: 483px; margin-left: 8px; } .f4 { margin-left: 11px; }

    text.s { font: 23.400px "Liberation Sans", sans-serif; text-anchor: middle; }
    text.h { font-size: 31px; }
    text.p { font-size: 35.400px; text-anchor: middle; }
    text.l { font: 30.400px "Liberation Sans", sans-serif; fill: #4a148c; }
    .abc { font: bold 8.500px "DejaVu Sans", sans-serif; }
    .pdf { font: bold 6px "DejaVu Sans", sans-serif; }
    .q { font: bold 18px "Open Sans", sans-serif; fill: #fff; }
    .bigA { font: bold 25px "Liberation Sans", sans-serif; fill: #2e3436; }
    .tt { font: bold 17px "Liberation Serif", serif; fill: #204a87; }
    .fw { font: italic 19px "Liberation Serif", serif; fill: #3b78c4; }
    .nn { font: bold 6px "DejaVu Sans", sans-serif; }
  `;

  private icon(n: string, s = 24) {
    return html`<svg width=${s} height=${s} viewBox="0 0 24 24">${ICONS[n]}</svg>`;
  }

  private item(it: Item) {
    const [k, w] = typeof it === "string" ? [it, 0] : it;
    const st = w ? `width:${w}px` : nothing;
    if (k === "_") return html`<span class="cell" style=${st}></span>`;
    if (k === "|") return html`<span class="cell sep" style=${st}><i></i></span>`;
    if (k === "v" || k === "v-") return html`<span class=${classMap({ cell: true, v: true, off: k === "v-" })} style=${st}><i></i></span>`;
    if (k === "g" || k === "g0") return html`<span class="cell ${k}" style=${st}><i></i></span>`;
    if (k === "»") return html`<span class="cell more">»</span>`;
    const on = k.endsWith("*");
    return html`<span class=${classMap({ cell: true, ic: true, on })}>${this.icon(on ? k.slice(0, -1) : k)}</span>`;
  }

  private close = html`<svg class="x" width="9" height="9" viewBox="0 0 9 9"><path d="M1.500 1l6 7M7.500 1l-6 7" stroke="#444" stroke-width="2"/></svg>`;
  private spin = html`<span class="spin"><i></i><i></i></span>`;

  private layout(l: (typeof LAYOUTS)[number]) {
    return html`<svg width="61" height="47" viewBox="0 0 61 47"><rect x=".5" y=".5" width="60" height="46" fill="#fff" stroke="url(#edge)"/>
      ${l.title ? svg`<rect x="5.500" y="4.500" width="50" height="8" fill="#fff" stroke="#bcc0c8"/><rect x="10" y="7" width="41" height="3" fill="#2e6ea6"/>` : nothing}
      ${(l.boxes ?? []).map(([x, y, w, h]) => svg`<rect x=${x + 0.5} y=${y + 0.5} width=${w - 1} height=${h - 1} fill="#fff" stroke="#b8babc"/>`)}
      ${(l.bars ?? []).map(([x, y, w, h]) => svg`<rect x=${x} y=${y} width=${w} height=${h} fill="#2e6ea6"/>`)}</svg>`;
  }

  render() {
    const grad = (id: string, a: string, b: string) => svg`<linearGradient id=${id} x1="0" y1="0" x2=".6" y2="1"><stop offset="0" stop-color=${a}/><stop offset="1" stop-color=${b}/></linearGradient>`;
    return html`
      <svg class="defs"><defs>
        ${grad("paper", "#ffffff", "#e2e3e0")}${grad("orange", "#fbb08a", "#e2501a")}${grad("orange2", "#fbc08a", "#f0762a")}
        ${grad("navy", "#3465a4", "#6b97cf")}${grad("steel", "#6f8fb3", "#9db3cc")}${grad("help", "#6fb0dc", "#1f63a0")}
        ${grad("sand", "#f2dc8c", "#d9c78a")}${grad("green", "#a6d96a", "#6bab22")}${grad("gray", "#f2f2f1", "#bdbdbb")}
        ${grad("gold", "#ffe9a0", "#f5b22a")}${grad("dark", "#222", "#888")}
        <linearGradient id="edge" x1="0" y1="0" x2="0" y2="1"><stop offset="0" stop-color="#888"/><stop offset="1" stop-color="#333"/></linearGradient>
      </defs></svg>
      <div class="app">
        <div class="tb">${TB1.map(i => this.item(i))}</div>
        <div class="tb">${TB2A.map(i => this.item(i))}
          <div class="combo w102"><span class="ln"><i></i></span>${this.spin}</div>
          ${this.item(["|", 10.5])}
          <div class="combo num w79"><span class="txt">0.00"</span>${this.spin}</div>
          ${this.item(["|", 11])}
          <div class="combo w115"><span class="sw blue"></span><span class="txt">Tango:</span>${this.spin}</div>
          ${this.item(["|", 9.5])}${this.item("bucket")}${this.item("|")}
          <div class="combo w85"><span class="txt">Color</span>${this.spin}</div>
          <div class="combo w129"><span class="sw sky"></span><span class="txt">Tango: Sky</span>${this.spin}</div>
          ${TB2B.map(i => this.item(i))}</div>

        <div class="mid">
          <div class="left">
            <div class="lt"><span>Slides</span>${this.close}</div>
            <div class="listrow">
              <div class="list"><div class="rows">
                ${SLIDES.map(([n, vb, art]) => html`<div class=${classMap({ row: true, sel: n === 38 })}>
                  <div class="n"><span>${n >= FIRST_VISIBLE ? n : nothing}</span>${n === 34 ? html`<svg width="15" height="12" viewBox="0 0 15 12"><path d="M0 3h5M2 6h3M0 9h5" stroke="#333" stroke-dasharray="2 1"/><path d="M9.500 2l4.500 4-4.500 4L5 6z" fill="#6a6ae8" stroke="#111"/></svg>` : nothing}</div>
                  <div class="th"><svg class=${vb === LOCAL ? "localfont" : ""} width="197" height="111" viewBox=${vb} preserveAspectRatio="none">${art}</svg></div>
                </div>`)}
              </div></div>
              <div class="sb"><div class="btn"><i></i></div><div class="s-a"></div><div class="thumb s-b"><i></i></div><div class="fill"></div><div class="btn dn"><i></i></div></div>
            </div>
          </div>
          <div class="split"><i></i></div>

          <div class="main">
            <div class="tabs"><div class="tab act t1">Normal</div><div class="tab t2">Outline</div><div class="tab t3">Notes</div><div class="tab t4">Handout</div><div class="tab t5">Slide Sorter</div></div>
            <div class="work">
              <div class="canvas"><div class="tick"></div><div class="slide"><svg viewBox=${CANVAS}>${clean(2)}</svg></div></div>
              <div class="sb vs"><div class="btn"><i></i></div><div class="m-a"></div><div class="thumb m-b"><i></i></div><div class="fill"></div><div class="btn dn"><i></i></div></div>
            </div>
            <div class="hs"><div class="hb"><i></i></div><div class="gl"></div><div class="ht"><i></i></div><div class="fill"></div><div class="hb rt"><i></i></div></div>
          </div>

          <div class="split r"><i></i></div>
          <div class="right">
            <div class="deck">
              <div class="dt"><span>Properties</span>${this.close}</div>
              <div class="dl"><svg width="9" height="9" viewBox="0 0 9 9"><rect x=".5" y=".5" width="8" height="8" fill="#fff" stroke="#4a5a70"/><path d="M2 4.500h5" stroke="#222"/></svg><span>Layouts</span></div>
              <div class="grid">${LAYOUTS.map((l, i) => html`<div class=${classMap({ lay: true, on: i === 0 })}>${this.layout(l)}</div>`)}</div>
            </div>
            <div class="side">
              <svg width="10" height="12" viewBox="0 0 10 12"><path d="M0 2.500h6M0 5.500h6M0 8.500h6" stroke="#2a3a66"/><path d="M3 8.500h7l-3.500 3.500z" fill="#111c3a"/></svg>
              <hr />
              ${["cubes", "master", "anim", "trans", "effects", "pics", "navi"].map((n, i) => html`<div class=${classMap({ sbtn: true, on: i === 0 })}>${this.icon(n, 24)}</div>`)}
            </div>
          </div>
        </div>

        <div class="tb bot">${TB3.map(i => this.item(i))}</div>
        <div class="status">
          <b class="b0"></b>
          <svg class="i0" width="15" height="13" viewBox="0 0 15 13"><path d="M4.500 0v9M0 4.500h9" stroke="#22c" stroke-dasharray="3 1"/><path d="M5.500 5.500h8v6h-8z" fill="none" stroke="#333" stroke-dasharray="1 1"/></svg>
          <span class="f0">13.08 / 7.98</span>
          <svg class="i1" width="15" height="13" viewBox="0 0 15 13"><path d="M4.500 4.500h9v7h-9z" fill="none" stroke="#333" stroke-dasharray="1 1"/><path d="M1.500 4v8M5 1.500h8M5 0v3M12.500 0v3" stroke="#333" stroke-dasharray="2 1"/></svg>
          <span class="f1">0.00 x 0.00</span>
          <b></b>
          <svg class="i2" width="15" height="15" viewBox="0 0 15 15"><path d="M1.500 1.500h8l4 4v8h-12z" fill="#fff" stroke="#8a8ae0"/><path d="M7 6h5M7 9h5M7 12h5" stroke="#8a8ae0"/><path d="M5 2v8M5 11.500v3" stroke="#e01010" stroke-width="2.500"/></svg>
          <b></b><b class="b1"></b>
          <span class="f2">Slide 38 / 51</span><b></b>
          <span class="f3">Blank Slide</span><b></b>
          <svg class="i3" width="130" height="15" viewBox="0 0 130 15"><path d="M1 7.500h8M117 7.500h9M121.500 3v9" stroke="#888" stroke-width="2"/><path d="M15 7.500h97" stroke="#b0aeab" stroke-width="2"/><circle cx="61" cy="7.500" r="3.700" fill="#fff" stroke="#888"/></svg>
          <b></b><span class="f4">97%</span>
        </div>
      </div>`;
  }
}
